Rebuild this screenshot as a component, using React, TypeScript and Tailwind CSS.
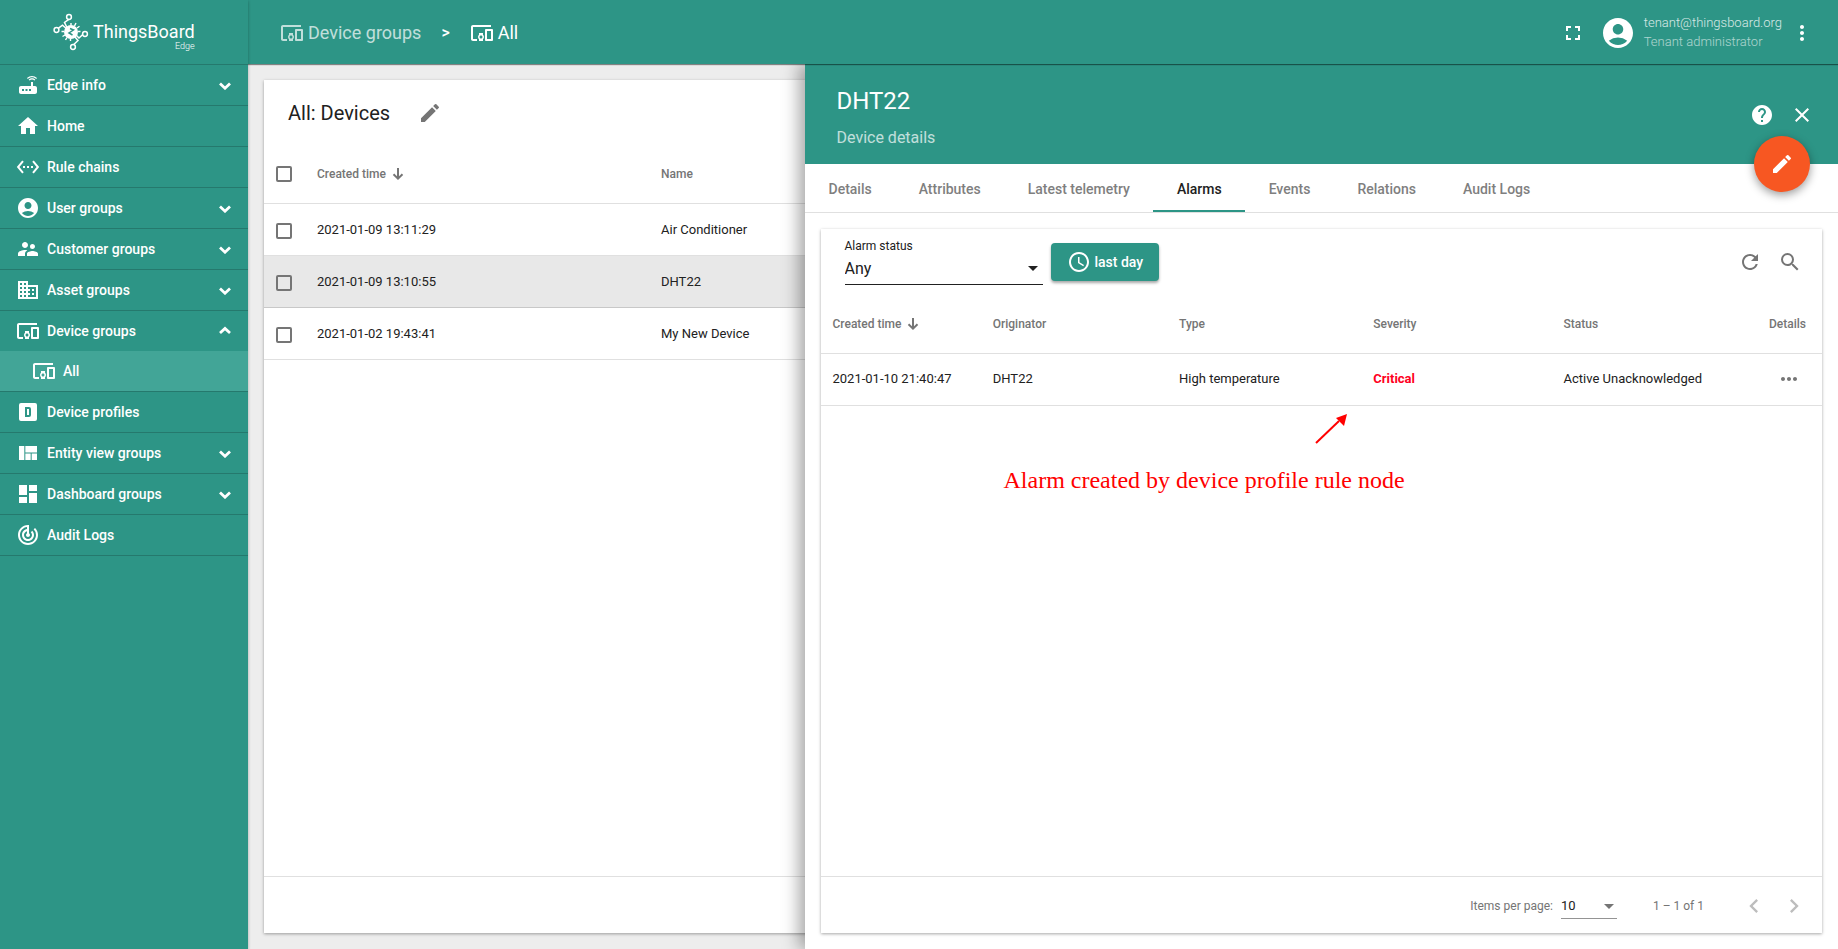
import React from 'react';
import {
  MdRouter, MdHome, MdSettingsEthernet, MdAccountCircle, MdSupervisorAccount, MdDomain,
  MdDevicesOther, MdViewQuilt, MdDashboard, MdTrackChanges,
  MdFullscreen, MdMoreVert, MdEdit, MdHelp, MdClose, MdRefresh, MdSearch, MdMoreHoriz,
  MdChevronLeft, MdChevronRight, MdArrowDropDown,
} from 'react-icons/md';

type IconType = React.ComponentType<{ className?: string }>;

function ProfileIcon({ className }: { className?: string }) {
  return (
    <svg viewBox="0 0 24 24" className={className} fill="currentColor" fillRule="evenodd" aria-hidden="true">
      <path d="M9 7h4a2 2 0 0 1 2 2v6a2 2 0 0 1-2 2H9V7m2 2v6h2V9h-2M5 3h14a2 2 0 0 1 2 2v14a2 2 0 0 1-2 2H5a2 2 0 0 1-2-2V5a2 2 0 0 1 2-2z" />
    </svg>
  );
}

function ClockIcon({ className }: { className?: string }) {
  return (
    <svg viewBox="0 0 24 24" className={className} fill="currentColor" aria-hidden="true">
      <path d="M11.99 2C6.47 2 2 6.48 2 12s4.47 10 9.99 10C17.52 22 22 17.52 22 12S17.52 2 11.99 2zM12 20c-4.42 0-8-3.58-8-8s3.58-8 8-8 8 3.58 8 8-3.58 8-8 8zM12.5 7H11v6l5.25 3.15.75-1.23-4.5-2.67z" />
    </svg>
  );
}

function SortArrow() {
  return (
    <svg viewBox="0 0 12 12" className="size-3" fill="none" stroke="currentColor" strokeWidth="2" aria-hidden="true">
      <path d="M6 0v10.5M1.500 6.200 6 10.600l4.500-4.400" />
    </svg>
  );
}

function Chevron({ open }: { open: boolean }) {
  return (
    <svg viewBox="0 0 14 10" className="h-2.5 w-3.5" fill="none" stroke="currentColor" strokeWidth="2.800" aria-hidden="true">
      <path d={open ? 'M2 7 7 2.500 12 7' : 'M2 3.500 7 8.200 12 3.500'} />
    </svg>
  );
}

function Logo() {
  return (
    <svg viewBox="0 0 36 38" className="h-[38px] w-9 shrink-0" fill="none" stroke="#fff" strokeWidth="1.500" aria-hidden="true">
      <circle cx="16" cy="4" r="2.400" />
      <circle cx="3.500" cy="17" r="2.400" />
      <circle cx="32" cy="21" r="2.400" />
      <circle cx="20" cy="34" r="2.400" />
      <path d="M15.800 6.400 11.500 9.500l2.500 5M5.500 15.200l4-3 4 3.500M29.500 21.800 26 25l-4-4M20.800 31.500l4.200-4-3.500-4" />
      <path strokeWidth="1.400" d="M18 12V10M21.500 13l1.500-3M24 15l2.500-1.800M25 18.500h2.500M11 18.500H8.500M12 22l-2.500 1.500M14 24.500l-1.500 2.500M17.500 25.500V28" />
      <circle cx="18" cy="19" r="7" fill="#fff" stroke="none" />
      <path stroke="#2d9586" strokeWidth="1.500" d="M17 15.500 20.500 17l-4.500 3 3.500 2" />
    </svg>
  );
}

type NavItem = { label: string; icon: IconType; expandable?: boolean; children?: { label: string; icon: IconType }[] };

const NAV: NavItem[] = [
  { label: 'Edge info', icon: MdRouter, expandable: true },
  { label: 'Home', icon: MdHome },
  { label: 'Rule chains', icon: MdSettingsEthernet },
  { label: 'User groups', icon: MdAccountCircle, expandable: true },
  { label: 'Customer groups', icon: MdSupervisorAccount, expandable: true },
  { label: 'Asset groups', icon: MdDomain, expandable: true },
  { label: 'Device groups', icon: MdDevicesOther, expandable: true, children: [{ label: 'All', icon: MdDevicesOther }] },
  { label: 'Device profiles', icon: ProfileIcon },
  { label: 'Entity view groups', icon: MdViewQuilt, expandable: true },
  { label: 'Dashboard groups', icon: MdDashboard, expandable: true },
  { label: 'Audit Logs', icon: MdTrackChanges },
];

function Sidebar() {
  return (
    <aside className="z-30 flex w-[248px] shrink-0 flex-col bg-[#2d9586] text-white shadow-[0_1px_3px_rgba(0,0,0,0.3)]">
      <a href="#home" className="flex h-16 items-center pl-[53px]">
        <Logo />
        <span className="flex flex-col pt-2 pl-1">
          <span className="text-lg leading-5">ThingsBoard</span>
          <span className="self-end text-[9px] leading-2 font-light">Edge</span>
        </span>
      </a>
      <nav className="border-t border-[#25796d]">
        <ul>
          {NAV.map(({ label, icon: Icon, expandable, children }) => (
            <li key={label} className="border-b border-[#25796d]">
              <a href="#nav" className="flex h-10 items-center gap-[7px] px-4 text-sm font-medium">
                <Icon className="size-6" />
                <span className="grow">{label}</span>
                {expandable && <Chevron open={Boolean(children)} />}
              </a>
              {children?.map(({ label: childLabel, icon: ChildIcon }) => (
                <a key={childLabel} href="#nav" className="flex h-10 items-center gap-[7px] bg-[#42a597] pl-8 text-sm font-medium">
                  <ChildIcon className="size-6" />
                  {childLabel}
                </a>
              ))}
            </li>
          ))}
        </ul>
      </nav>
    </aside>
  );
}

function TopBar() {
  return (
    <header className="z-20 flex h-16 shrink-0 items-center bg-[#2d9586] pt-0.5 pr-6 pl-8 text-white shadow-[0_1px_1px_rgba(0,0,0,0.45)]">
      <nav aria-label="Breadcrumb" className="flex grow items-center text-lg">
        <a href="#groups" className="flex items-center gap-1 opacity-70"><MdDevicesOther className="size-6" />Device groups</a>
        <span className="px-5 text-base font-medium">&gt;</span>
        <a href="#all" className="flex items-center gap-1"><MdDevicesOther className="size-6" />All</a>
      </nav>
      <button type="button" aria-label="Fullscreen" className="mr-[15px]"><MdFullscreen className="size-6" /></button>
      <MdAccountCircle className="mr-2 size-9" />
      <div className="pb-0.5 text-[13px] leading-[19px] font-light">
        <div className="opacity-80">tenant@thingsboard.org</div>
        <div className="opacity-60">Tenant administrator</div>
      </div>
      <button type="button" aria-label="More" className="ml-2"><MdMoreVert className="size-6" /></button>
    </header>
  );
}

const DEVICES = [
  { time: '2021-01-09 13:11:29', name: 'Air Conditioner' },
  { time: '2021-01-09 13:10:55', name: 'DHT22', selected: true },
  { time: '2021-01-02 19:43:41', name: 'My New Device' },
];

const CHECKBOX = 'mt-0.5 block size-4 appearance-none rounded-xs border-2 border-[#757575]';

function DevicesCard() {
  return (
    <section className="flex grow flex-col bg-white shadow-[0_1px_3px_rgba(0,0,0,0.35)]">
      <div className="flex h-16 items-center pt-0.5 pl-6">
        <h1 className="text-xl">All: Devices</h1>
        <button type="button" aria-label="Edit group" className="ml-7 text-[#757575]"><MdEdit className="size-6" /></button>
      </div>
      <table className="w-full table-fixed text-left text-[13px]">
        <thead>
          <tr className="h-[59px] border-b border-[#e0e0e0] text-xs text-[#757575]">
            <th className="w-[53px] pl-3"><input type="checkbox" aria-label="Select all" className={CHECKBOX} /></th>
            <th className="w-[344px] pt-0.5 font-medium"><span className="flex items-center gap-1.5">Created time <SortArrow /></span></th>
            <th className="pt-0.5 font-medium">Name</th>
          </tr>
        </thead>
        <tbody>
          {DEVICES.map((d) => (
            <tr key={d.time} className={d.selected ? 'h-[52px] border-b border-[#c8c8c8] bg-[#e8e8e8]' : 'h-[52px] border-b border-[#e0e0e0]'}>
              <td className="pt-0.5 pl-3"><input type="checkbox" aria-label={d.name} className={CHECKBOX} /></td>
              <td className="pt-0.5">{d.time}</td>
              <td className="pt-0.5">{d.name}</td>
            </tr>
          ))}
        </tbody>
      </table>
      <div className="mt-auto h-[57px] border-t border-[#e0e0e0]" />
    </section>
  );
}

const TABS = ['Details', 'Attributes', 'Latest telemetry', 'Alarms', 'Events', 'Relations', 'Audit Logs'];

function AlarmsCard() {
  return (
    <section className="m-4 flex grow flex-col bg-white shadow-[0_1px_3px_rgba(0,0,0,0.35)]">
      <div className="flex h-[66px] items-start pt-3.5 pr-5 pl-6">
        <div className="relative -mt-[7px] mr-2 w-[198px] border-b border-[#212121]">
          <label htmlFor="alarm-status" className="block text-xs leading-5">Alarm status</label>
          <select id="alarm-status" className="block h-7 w-full appearance-none bg-transparent pb-[3px] text-base leading-5 outline-none"><option>Any</option></select>
          <MdArrowDropDown className="pointer-events-none absolute -right-0.5 bottom-1 size-6" />
        </div>
        <button type="button" className="flex h-[38px] items-center gap-1 rounded-sm bg-[#2d9586] px-4 text-sm font-medium text-white shadow-[0_2px_3px_rgba(0,0,0,0.35)]">
          <ClockIcon className="size-6" />last day
        </button>
        <div className="ml-auto flex h-[38px] items-center gap-4 text-[#757575]">
          <button type="button" aria-label="Refresh"><MdRefresh className="size-6" /></button>
          <button type="button" aria-label="Search"><MdSearch className="size-6" /></button>
        </div>
      </div>
      <table className="w-full table-fixed text-left text-[13px]">
        <thead>
          <tr className="h-[58px] border-b border-[#e0e0e0] text-xs text-[#757575]">
            <th className="w-[17.2%] pl-3 font-medium"><span className="flex items-center gap-1.5">Created time <SortArrow /></span></th>
            <th className="w-[18.6%] font-medium">Originator</th>
            <th className="w-[19.4%] font-medium">Type</th>
            <th className="w-[19%] font-medium">Severity</th>
            <th className="font-medium">Status</th>
            <th className="w-[66px] pr-4 text-right font-medium">Details</th>
          </tr>
        </thead>
        <tbody>
          <tr className="h-[52px] border-b border-[#e0e0e0]">
            <td className="pl-3">2021-01-10 21:40:47</td>
            <td>DHT22</td>
            <td>High temperature</td>
            <td className="font-bold text-[#ff0022]">Critical</td>
            <td>Active Unacknowledged</td>
            <td><button type="button" aria-label="Alarm details" className="ml-[21px] block text-[#757575]"><MdMoreHoriz className="size-6" /></button></td>
          </tr>
        </tbody>
      </table>
      <div className="mt-auto flex h-[57px] items-center justify-end border-t border-[#e0e0e0] pt-0.5 pr-3.5 text-xs text-[#757575]">
        <label htmlFor="page-size">Items per page:</label>
        <div className="relative ml-2 w-14 border-b border-[#949494]">
          <select id="page-size" className="block h-6 w-full appearance-none bg-transparent text-[13px] text-[#212121] outline-none"><option>10</option></select>
          <MdArrowDropDown className="pointer-events-none absolute -right-1 bottom-0 size-6" />
        </div>
        <span className="mr-9 ml-9">1 – 1 of 1</span>
        <button type="button" aria-label="Previous page" className="mr-3 text-[#bdbdbd]"><MdChevronLeft className="size-7" /></button>
        <button type="button" aria-label="Next page" className="text-[#bdbdbd]"><MdChevronRight className="size-7" /></button>
      </div>
    </section>
  );
}

function DetailsDrawer() {
  return (
    <div className="absolute inset-y-0 right-0 z-10 flex w-[65%] flex-col bg-white shadow-[-6px_0_16px_rgba(0,0,0,0.35)]">
      <div className="relative flex h-[100px] shrink-0 justify-between bg-[#2d9586] pr-6 pl-8 text-white">
        <div className="pt-[21px]">
          <h2 className="text-2xl leading-8">DHT22</h2>
          <p className="pt-[9px] text-base leading-6 opacity-70">Device details</p>
        </div>
        <div className="flex items-center gap-4 pt-0.5">
          <button type="button" aria-label="Help"><MdHelp className="size-6" /></button>
          <button type="button" aria-label="Close"><MdClose className="size-6" /></button>
        </div>
        <button type="button" aria-label="Edit device" className="absolute right-7 -bottom-7 flex size-14 items-center justify-center rounded-full bg-[#f75722] shadow-[0_3px_10px_rgba(0,0,0,0.4)]">
          <MdEdit className="size-6" />
        </button>
      </div>
      <div role="tablist" className="flex h-[49px] shrink-0 border-b border-[#e0e0e0] text-sm font-medium">
        {TABS.map((t) => (
          <button
            key={t}
            type="button"
            role="tab"
            aria-selected={t === 'Alarms'}
            className={t === 'Alarms' ? 'border-b-2 border-[#2d9586] pt-[3px] pr-[23px] pl-6 text-[#212121]' : 'pt-px pr-[23px] pl-6 text-[#7f7f7f]'}
          >
            {t}
          </button>
        ))}
      </div>
      <AlarmsCard />
      <figure className="absolute top-[346px] left-[199px] w-[420px] text-[#ff0000]">
        <svg viewBox="0 0 36 34" className="ml-[309px] h-[34px] w-9" aria-hidden="true">
          <path d="M3 33 26 11" stroke="currentColor" strokeWidth="2" />
          <path d="M34 4 23 8l8 8z" fill="currentColor" />
        </svg>
        <figcaption className="mt-5 font-['Liberation_Serif',serif] text-2xl leading-8 whitespace-nowrap">Alarm created by device profile rule node</figcaption>
      </figure>
    </div>
  );
}

export default function App() {
  return (
    <div className="flex h-screen overflow-hidden bg-[#ededed] font-[Roboto,sans-serif] text-[#212121]">
      <Sidebar />
      <div className="flex min-w-0 grow flex-col">
        <TopBar />
        <main className="relative flex min-h-0 grow flex-col overflow-hidden p-4">
          <DevicesCard />
          <DetailsDrawer />
        </main>
      </div>
    </div>
  );
}
